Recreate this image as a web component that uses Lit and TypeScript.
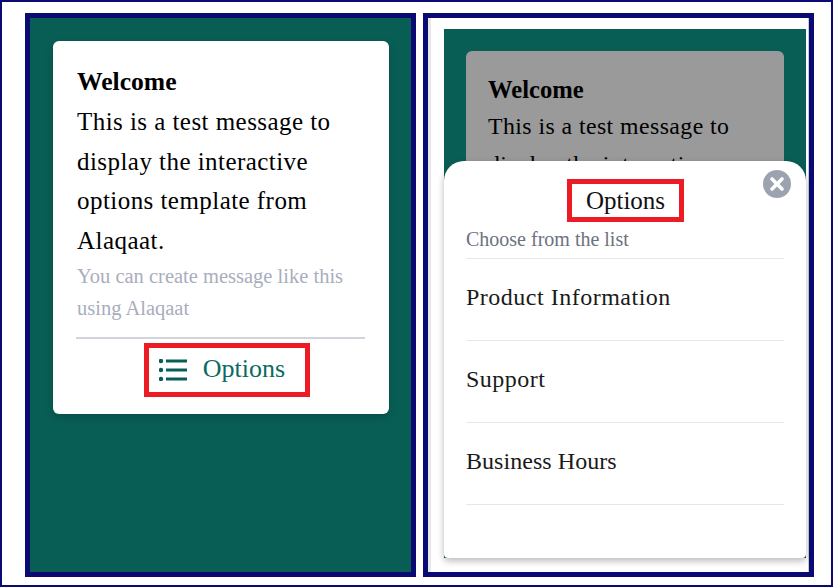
import { LitElement, html, css } from "lit";
import { customElement } from "lit/decorators.js";

@customElement("app-root")
export class AppRoot extends LitElement {
  static styles = css`
    :host { display: block; width: 833px; height: 587px; font-family: "Liberation Serif", serif; }
    * { box-sizing: border-box; }
    .frame { width: 833px; height: 587px; border: 2px solid #0a0a72; background: #fff; padding: 11px 0 0 23px; display: flex; gap: 7px; align-items: flex-start; }
    .phone { width: 391px; height: 564px; border: 5px solid #0a0a72; flex: none; }
    .left { background: #085e55; padding: 23px; }
    .card { background: #fff; width: 336px; border-radius: 6px; box-shadow: 0 3px 8px rgba(0,0,0,.18); padding: 23px 24px 17px; height: 373px; }
    .title { font-weight: 700; font-size: 25.6px; line-height: 36px; color: #000; }
    .msg { font-size: 25px; line-height: 39.7px; color: #000; letter-spacing: .45px; margin-top: 2px; }
    .hint { font-size: 20.5px; line-height: 32px; color: #a9adbd; margin-top: -1px; }
    .rule { height: 2px; background: #d1d5db; margin: 13px 0 0 -1px; width: 289px; }
    .action { display: flex; justify-content: center; margin-top: 4px; }
    .box { border: 5px solid #ed1c24; display: flex; align-items: center; justify-content: center; }
    .optbox { width: 166px; height: 54px; margin-left: 11px; gap: 16px; color: #0b6b62; font-size: 26px; padding: 0 9px 2px 0; }
    .optbox svg { display: block; margin-top: 3px; }
    .right { background: #fff; padding: 11px 4px 0 16px; box-shadow: inset 3px 0 0 #e5e7eb, inset -1px 0 0 #c9ccd6; }
    .screen { position: relative; width: 362px; height: 529px; background: #085e55; padding: 22px; }
    .card2 { background: #9a9a9a; border-radius: 6px; padding: 21px 22px; height: 300px; overflow: hidden; }
    .title2 { font-weight: 700; font-size: 24.6px; line-height: 35px; color: #000; }
    .msg2 { font-size: 23.8px; line-height: 37.8px; color: #000; letter-spacing: .43px; margin-top: 1px; }
    .sheet { position: absolute; left: 0; right: 0; top: 132px; bottom: 0; background: #fff; border-radius: 20px 20px 4px 4px; box-shadow: 0 3px 7px rgba(0,0,0,.28); padding: 18px 22px 0; }
    .close { position: absolute; right: 15px; top: 9px; width: 28px; height: 28px; }
    .sheadbox { width: 117px; height: 43px; margin: 0 0 0 101px; font-size: 25px; color: #111; }
    .sub { font-size: 20px; line-height: 26px; color: #6b7280; margin-top: 4px; height: 33px; border-bottom: 1px solid #e2e8f0; }
    .item { height: 82px; border-bottom: 1px solid #e2e8f0; font-size: 24px; letter-spacing: .5px; color: #1a1a1a; display: flex; align-items: center; padding-bottom: 5px; }
    .tight { letter-spacing: .05px; }
  `;
  render() {
    return html`<div class="frame">
      <div class="phone left">
        <div class="card">
          <div class="title">Welcome</div>
          <div class="msg">This is a test message to display the interactive options template from Alaqaat.</div>
          <div class="hint">You can create message like this using Alaqaat</div>
          <div class="rule"></div>
          <div class="action"><div class="box optbox">
            <svg width="28" height="22" viewBox="0 0 28 22" fill="none" stroke="#085e55" stroke-width="3"><path d="M7 2H28M7 11H28M7 20H28"/><g fill="#085e55" stroke="none"><circle cx="2" cy="2" r="2.200"/><circle cx="2" cy="11" r="2.200"/><circle cx="2" cy="20" r="2.200"/></g></svg>
            <span>Options</span>
          </div></div>
        </div>
      </div>
      <div class="phone right">
        <div class="screen">
          <div class="card2">
            <div class="title2">Welcome</div>
            <div class="msg2">This is a test message to display the interactive options template from Alaqaat.</div>
          </div>
          <div class="sheet">
            <svg class="close" viewBox="0 0 28 28"><circle cx="14" cy="14" r="14" fill="#9ca3af"/><path d="M9 9L19 19M19 9L9 19" stroke="#fff" stroke-width="3.600" stroke-linecap="round"/></svg>
            <div class="box sheadbox">Options</div>
            <div class="sub">Choose from the list</div>
            <div class="item">Product Information</div>
            <div class="item">Support</div>
            <div class="item tight">Business Hours</div>
          </div>
        </div>
      </div>
    </div>`;
  }
}
